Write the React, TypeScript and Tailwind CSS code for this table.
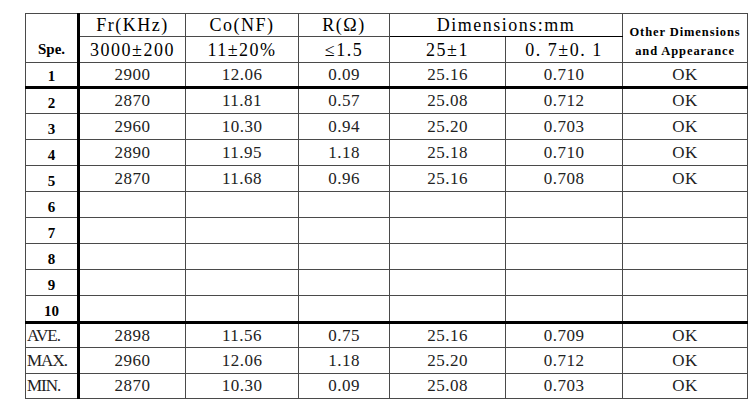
const ROWS: (string[] | null)[] = [
  ['2900', '12.06', '0.09', '25.16', '0.710', 'OK'],
  ['2870', '11.81', '0.57', '25.08', '0.712', 'OK'],
  ['2960', '10.30', '0.94', '25.20', '0.703', 'OK'],
  ['2890', '11.95', '1.18', '25.18', '0.710', 'OK'],
  ['2870', '11.68', '0.96', '25.16', '0.708', 'OK'],
  null,
  null,
  null,
  null,
  null,
]

const STATS: [string, string[]][] = [
  ['AVE.', ['2898', '11.56', '0.75', '25.16', '0.709', 'OK']],
  ['MAX.', ['2960', '12.06', '1.18', '25.20', '0.712', 'OK']],
  ['MIN.', ['2870', '10.30', '0.09', '25.08', '0.703', 'OK']],
]

const serif = "font-['Liberation_Serif','Times_New_Roman',serif]"
const head = `${serif} text-[18px] leading-[18px] font-normal tracking-[1.5px] text-black`
const cell = 'border border-[#4a4a4a] p-0 text-center'
const data = `${cell} ${serif} text-[17px] leading-[18px] tracking-[0.5px] text-[#222]`

export default function App() {
  return (
    <div className="min-h-[412px] w-[756px] bg-white pl-[25px] pt-[13px]">
      <table className="w-[722px] table-fixed border-collapse border border-[#6b6b6b]">
        <colgroup>
          <col className="w-[53px]" />
          <col className="w-[107px]" />
          <col className="w-[113px]" />
          <col className="w-[91px]" />
          <col className="w-[116px]" />
          <col className="w-[117px]" />
          <col className="w-[125px]" />
        </colgroup>
        <thead>
          <tr className="h-[23px]">
            <th rowSpan={2} className={`${cell} border-r-[3px] border-r-black align-bottom pb-[5px] ${serif} text-[15px] leading-[16px] font-bold text-black`}>
              Spe.
            </th>
            <th className={`${cell} ${head}`}>Fr(KHz)</th>
            <th className={`${cell} ${head}`}>Co(NF)</th>
            <th className={`${cell} ${head}`}>R(Ω)</th>
            <th colSpan={2} className={`${cell} border-b-black ${head}`}>Dimensions:mm</th>
            <th rowSpan={2} className={`${cell} align-bottom pb-[1px] ${serif} text-[12.5px] font-bold leading-[19px] tracking-[0.9px] text-black`}>
              Other Dimensions
              <br />
              and Appearance
            </th>
          </tr>
          <tr className="h-[26px]">
            <th className={`${cell} ${head}`}>3000±200</th>
            <th className={`${cell} ${head}`}>11±20%</th>
            <th className={`${cell} ${head}`}>≤1.5</th>
            <th className={`${cell} ${head}`}>25±1</th>
            <th className={`${cell} ${head}`}>0. 7±0. 1</th>
          </tr>
        </thead>
        <tbody>
          {ROWS.map((row, i) => (
            <tr
              key={i}
              className={i === 0 ? 'h-[25px] border-b-[3px] border-b-black' : i === 9 ? 'h-[27px] border-b-[3px] border-b-black' : 'h-[26px]'}
            >
              <td className={`${cell} border-r-[3px] border-r-black align-bottom pb-[1px] ${serif} text-[15px] font-bold leading-[18px] text-black`}>
                {i + 1}
              </td>
              {(row ?? ['', '', '', '', '', '']).map((v, j) => (
                <td key={j} className={data}>
                  {v}
                </td>
              ))}
            </tr>
          ))}
          {STATS.map(([label, vals], i) => (
            <tr key={label} className={i === 1 ? 'h-[26px]' : 'h-[25px]'}>
              <td className={`${cell} border-r-[3px] border-r-black pl-[1px] text-left ${serif} text-[17px] leading-[18px] tracking-[-1px] text-[#222]`}>
                {label}
              </td>
              {vals.map((v, j) => (
                <td key={j} className={data}>
                  {v}
                </td>
              ))}
            </tr>
          ))}
        </tbody>
      </table>
    </div>
  )
}
